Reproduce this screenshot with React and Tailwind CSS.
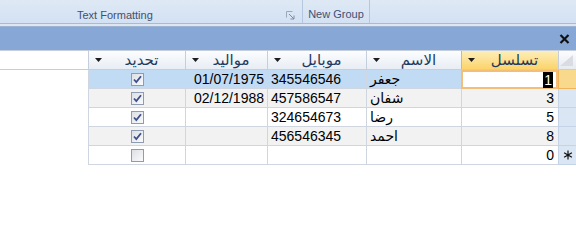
import React from 'react';

const font = { fontFamily: '"Liberation Sans", "DejaVu Sans", sans-serif' };

// column widths, left to right
const cols = [
    { key: 'pad', w: 'w-[88px]' },
    { key: 'chk', w: 'w-[97px]', title: 'تحديد' },
    { key: 'dob', w: 'w-[82px]', title: 'مواليد' },
    { key: 'mob', w: 'w-[99px]', title: 'موبايل' },
    { key: 'name', w: 'w-[95px]', title: 'الاسم' },
    { key: 'seq', w: 'w-[97px]', title: 'تسلسل' },
    { key: 'sel', w: 'w-[18px]' },
];

const rows = [
    { seq: '1', name: 'جعفر', mob: '345546546', dob: '01/07/1975', chk: true },
    { seq: '3', name: 'شفان', mob: '457586547', dob: '02/12/1988', chk: true },
    { seq: '5', name: 'رضا', mob: '324654673', dob: '', chk: true },
    { seq: '8', name: 'احمد', mob: '456546345', dob: '', chk: true },
    { seq: '0', name: '', mob: '', dob: '', chk: false, isNew: true },
];

const Arrow = () => (
    <svg width="7" height="4" viewBox="0 0 7 4" className="shrink-0">
        <path d="M0 0h7L3.5 4z" fill="#1d1d1d" />
    </svg>
);

const Star = () => (
    <svg width="10" height="10" viewBox="0 0 10 10">
        <path d="M5 0.5v9M1.1 2.75l7.8 4.5M1.1 7.25l7.8-4.5" stroke="#111" strokeWidth="1.2" />
    </svg>
);

const CheckBox = ({ checked }) => (
    <div className="w-[13px] h-[13px] border border-[#8e9bb0] bg-gradient-to-br from-[#dcdfe4] to-[#fbfbfc] flex items-center justify-center">
        {checked && (
            <svg width="9" height="9" viewBox="0 0 9 9">
                <path d="M1 4.5l2.3 2.5L8 1.2" stroke="#3d4f8c" strokeWidth="1.8" fill="none" />
            </svg>
        )}
    </div>
);

const HeaderCell = ({ col, active }) => {
    if (col.key === 'pad') return <div className={`${col.w} h-full`} />;
    if (col.key === 'sel')
        return (
            <div className={`${col.w} h-full border-l border-[#c5cfdc] bg-gradient-to-b from-[#fbfcfd] to-[#e6ebf2] relative`}>
                <svg width="13" height="11" viewBox="0 0 13 11" className="absolute right-[3px] top-[4px]">
                    <path d="M13 0v11H0z" fill="#d9dde3" />
                </svg>
            </div>
        );
    return (
        <div
            className={`${col.w} h-full border-l flex items-center pl-[6px] pr-[4px] ${
                active
                    ? 'border-[#f0b35a] bg-gradient-to-b from-[#fdeeb8] to-[#fbd46a]'
                    : 'border-[#c5cfdc] bg-gradient-to-b from-[#fcfdfe] to-[#e8edf4]'
            }`}
        >
            <Arrow />
            <span className="flex-1 text-center text-[15px] text-[#1f3b5f]" dir="rtl">{col.title}</span>
        </div>
    );
};

const Cell = ({ col, row, index }) => {
    const selected = index === 0;
    const alt = index % 2 === 1;
    const bg = selected ? 'bg-[#c2dbf4]' : alt ? 'bg-[#f2f2f2]' : 'bg-white';

    if (col.key === 'pad') return <div className={`${col.w} h-full bg-white`} />;
    if (col.key === 'sel')
        return (
            <div
                className={`${col.w} h-full border-l border-b flex items-center justify-center ${
                    selected ? 'border-[#f0b35a] bg-[#f9d98c]' : 'border-[#c5d3e6] bg-[#dbe6f4]'
                }`}
            >
                {row.isNew && <Star />}
            </div>
        );
    if (col.key === 'chk')
        return (
            <div className={`${col.w} h-full border-l border-b border-[#cfd6df] ${bg} flex items-center justify-center`}>
                <CheckBox checked={row.chk} />
            </div>
        );
    if (col.key === 'seq') {
        if (selected)
            return (
                <div className={`${col.w} h-full border-2 border-[#f4bd78] bg-white flex items-center justify-end pr-[3px]`}>
                    <span className="bg-black text-white px-[1px] leading-[16px] text-[14px]">{row.seq}</span>
                </div>
            );
        return (
            <div className={`${col.w} h-full border-l border-b border-[#cfd6df] ${bg} flex items-center justify-end pr-[4px] text-[14px]`}>
                {row.seq}
            </div>
        );
    }
    const align = col.key === 'dob' ? 'justify-end pr-[3px]' : 'justify-start pl-[3px]';
    return (
        <div className={`${col.w} h-full border-l border-b border-[#cfd6df] ${bg} flex items-center ${align} text-[14px] text-black whitespace-nowrap overflow-hidden`}>
            <span dir={col.key === 'name' ? 'rtl' : 'ltr'}>{row[col.key]}</span>
        </div>
    );
};

export default function App() {
    return (
        <div className="w-[576px] h-[241px] bg-white overflow-hidden" style={font}>
            {/* ribbon bottom strip */}
            <div className="h-[23px] bg-gradient-to-b from-[#dfe9f5] to-[#d3e1f3] flex items-stretch">
                <div className="w-[302px] flex items-end">
                    <div className="ml-[72px] w-[230px] h-[15px] flex items-center">
                        <span className="ml-[5px] text-[11px] text-[#3e5170]">Text Formatting</span>
                        <svg width="9" height="9" viewBox="0 0 9 9" className="ml-auto mr-[7px]">
                            <path d="M0.5 0.5h6M0.5 0.5v6" stroke="#9aa8bb" />
                            <path d="M3 3l5 5M8 4.5V8H4.5" stroke="#7c8ca3" fill="none" />
                        </svg>
                    </div>
                </div>
                <div className="w-px bg-[#b5c7de]" />
                <div className="w-[66px] flex items-end justify-center pb-[1px]">
                    <span className="text-[11px] text-[#3e5170] leading-[15px]">New Group</span>
                </div>
                <div className="w-px bg-[#b5c7de]" />
            </div>
            <div className="h-[1px] bg-[#a9bbd3]" />
            <div className="h-[2px] bg-[#dde6f1]" />
            <div className="h-[1px] bg-[#9db3d2]" />
            {/* document bar */}
            <div className="h-[23px] bg-[#87a7d7] flex items-center justify-end pr-[6px]">
                <svg width="11" height="10" viewBox="0 0 11 10">
                    <path d="M1.5 1l8 8M9.5 1l-8 8" stroke="#111" strokeWidth="2.2" />
                </svg>
            </div>
            {/* datasheet header */}
            <div className="h-[20px] flex border-t border-b border-[#c5cfdc]">
                {cols.map((c) => (
                    <HeaderCell key={c.key} col={c} active={c.key === 'seq'} />
                ))}
            </div>
            {rows.map((r, i) => (
                <div key={i} className="h-[19px] flex">
                    {cols.map((c) => (
                        <Cell key={c.key} col={c} row={r} index={i} />
                    ))}
                </div>
            ))}
        </div>
    );
}
